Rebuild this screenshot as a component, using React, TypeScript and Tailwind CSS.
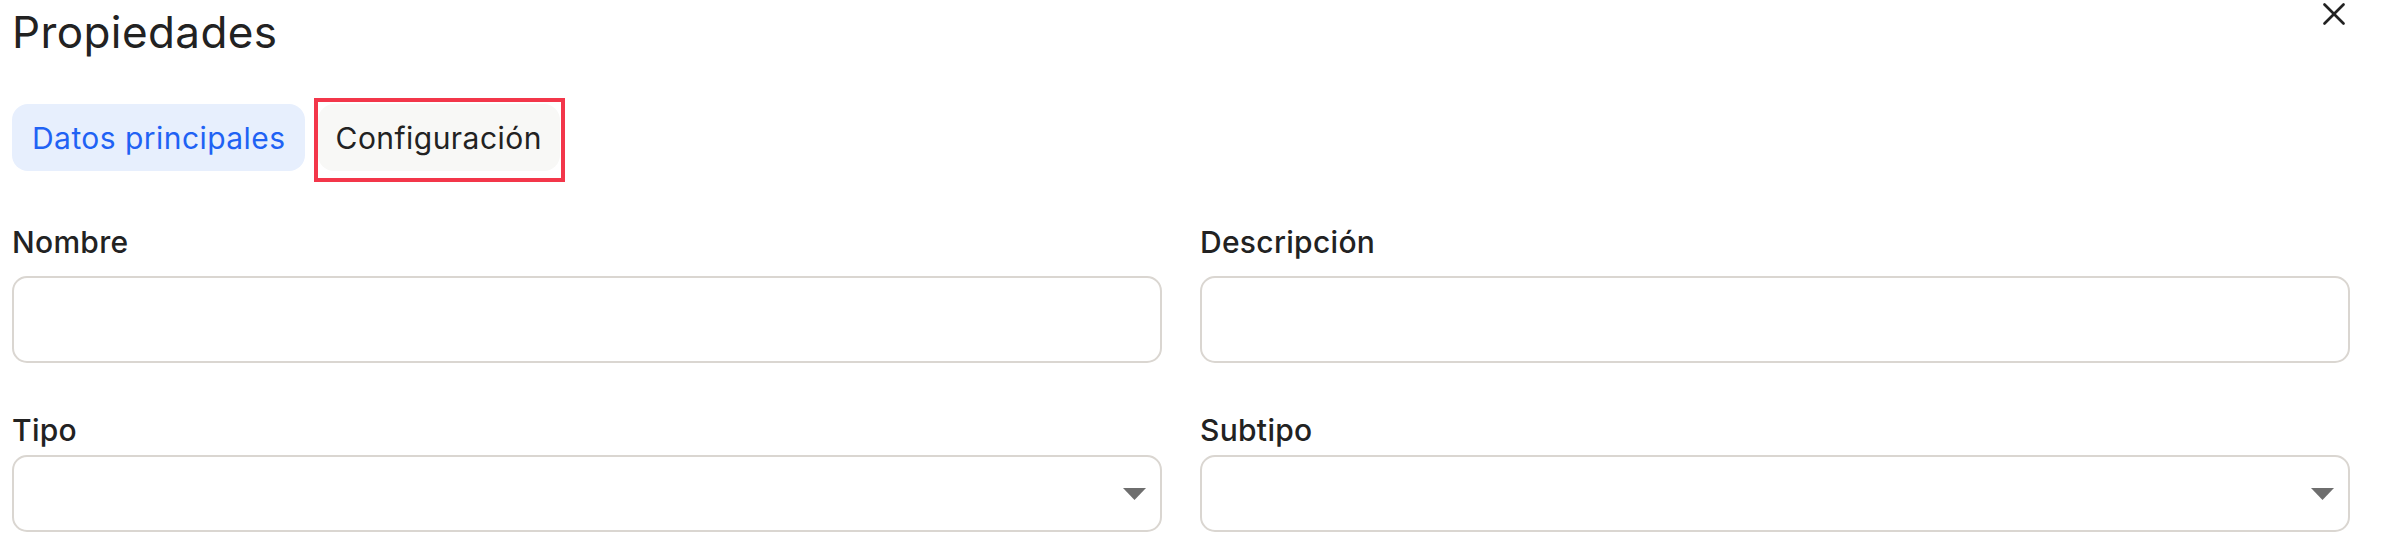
import React from "react";

function Field({
  label,
  select,
  labelMt,
  gap,
  h,
}: {
  label: string;
  select?: boolean;
  labelMt: string;
  gap: string;
  h: string;
}) {
  return (
    <div className={`flex flex-col ${labelMt}`}>
      <div className="text-[30px] leading-[36px] text-[#222222] font-medium tracking-[0.3px]">{label}</div>
      <div
        className={`relative ${gap} ${h} w-full rounded-[15px] border-2 border-[#dad6d1] bg-white`}
      >
        {select && (
          <svg
            className="absolute right-[14px] top-1/2 -translate-y-1/2"
            width="23"
            height="12"
            viewBox="0 0 23 12"
          >
            <polygon points="0,0 23,0 11.5,12" fill="#6e6e6e" />
          </svg>
        )}
      </div>
    </div>
  );
}

export default function App() {
  return (
    <div
      className="relative w-[2396px] h-[556px] bg-white pl-3 pr-[46px] overflow-hidden"
      style={{ fontFamily: "Inter, 'Noto Sans', sans-serif" }}
    >
      <button className="absolute right-[51px] top-[3px] w-[22px] h-[22px]" aria-label="Cerrar">
        <svg width="22" height="22" viewBox="0 0 22 22">
          <line x1="1.5" y1="1.5" x2="20.5" y2="20.5" stroke="#222222" strokeWidth="2.6" strokeLinecap="round" />
          <line x1="20.5" y1="1.5" x2="1.5" y2="20.5" stroke="#222222" strokeWidth="2.6" strokeLinecap="round" />
        </svg>
      </button>

      <h1 className="pt-[6px] text-[44px] leading-[52px] font-normal text-[#222222] tracking-[0.4px]">Propiedades</h1>

      <div className="mt-[46px] flex items-center gap-[13px]">
        <div className="h-[67px] flex items-center pl-[20px] pr-[19px] rounded-[16px] bg-[#e7effd] text-[30px] leading-[36px] text-[#1f62f4] tracking-[0.45px]">
          Datos principales
        </div>
        <div className="relative h-[67px] flex items-center px-[18px] rounded-[16px] bg-[#f8f8f6] text-[30px] leading-[36px] text-[#222222] tracking-[0.45px]">
          Configuración
          <div className="pointer-events-none absolute left-[-4px] top-[-6px] right-[-5px] bottom-[-11px] border-4 border-[#f3364a]" />
        </div>
      </div>

      <div className="grid grid-cols-2 gap-x-[38px]">
        <Field label="Nombre" labelMt="mt-[53px]" gap="mt-[16px]" h="h-[87px]" />
        <Field label="Descripción" labelMt="mt-[53px]" gap="mt-[16px]" h="h-[87px]" />
        <Field label="Tipo" select labelMt="mt-[49px]" gap="mt-[7px]" h="h-[77px]" />
        <Field label="Subtipo" select labelMt="mt-[49px]" gap="mt-[7px]" h="h-[77px]" />
      </div>
    </div>
  );
}
